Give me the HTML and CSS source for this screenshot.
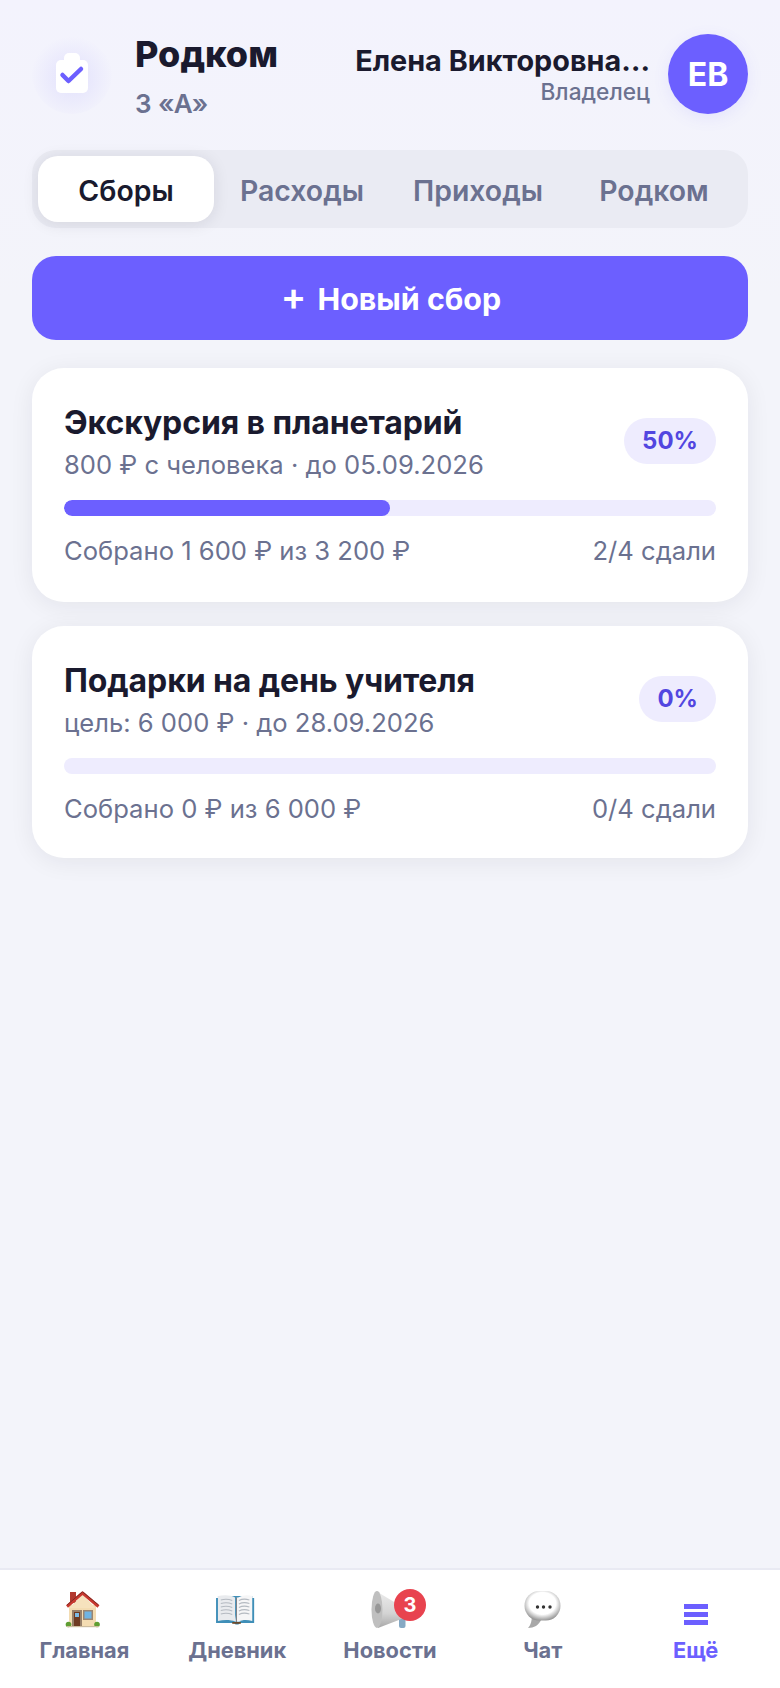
FILE: index.html
```html
<!DOCTYPE html>
<html lang="ru">
<head>
    <meta charset="UTF-8">
    <meta name="viewport" content="width=device-width, initial-scale=1.0">
    <title>Родком</title>
    <link rel="stylesheet" href="styles.css">
</head>
<body>
    <div class="page">
        <header class="header">
            <div class="logo">
                <svg width="48" height="56" viewBox="0 0 48 56">
                    <rect x="16" y="7" width="16" height="14" rx="5" fill="#fff"/>
                    <rect x="8" y="14" width="32" height="33" rx="5" fill="#fff"/>
                    <path d="M14.500 29l6 6 12.500-12" fill="none" stroke="#6c5fff" stroke-width="4.500" stroke-linecap="round" stroke-linejoin="round"/>
                </svg>
            </div>
            <div class="brand">
                <div class="brand-title">Родком</div>
                <div class="brand-class">3 «А»</div>
            </div>
            <div class="user">
                <div class="user-name">Елена Викторовна…</div>
                <div class="user-role">Владелец</div>
            </div>
            <div class="avatar">ЕВ</div>
        </header>

        <nav class="tabs">
            <div class="tab active">Сборы</div>
            <div class="tab">Расходы</div>
            <div class="tab">Приходы</div>
            <div class="tab">Родком</div>
        </nav>

        <button class="add-btn"><span class="plus">+</span> Новый сбор</button>

        <div class="card">
            <div class="card-top">
                <div>
                    <div class="card-title">Экскурсия в планетарий</div>
                    <div class="card-sub">800 ₽ с человека · до 05.09.2026</div>
                </div>
                <div class="pill">50%</div>
            </div>
            <div class="bar"><div class="bar-fill" style="width: 50%;"></div></div>
            <div class="card-bottom">
                <span>Собрано 1 600 ₽ из 3 200 ₽</span>
                <span>2/4 сдали</span>
            </div>
        </div>

        <div class="card">
            <div class="card-top">
                <div>
                    <div class="card-title">Подарки на день учителя</div>
                    <div class="card-sub">цель: 6 000 ₽ · до 28.09.2026</div>
                </div>
                <div class="pill">0%</div>
            </div>
            <div class="bar"><div class="bar-fill" style="width: 0%;"></div></div>
            <div class="card-bottom">
                <span>Собрано 0 ₽ из 6 000 ₽</span>
                <span>0/4 сдали</span>
            </div>
        </div>

        <footer class="bottom-nav">
            <div class="nav-item">
                <div class="nav-icon">
                    <svg width="40" height="40" viewBox="-1 0 40 40">
                        <rect x="5" y="2" width="6" height="11" fill="#b23a30"/>
                        <rect x="4" y="15" width="27" height="21" fill="#f3dcb2"/>
                        <path d="M17.500 5L31 18H4z" fill="#f6e2bd"/>
                        <path d="M2 16.500L17.500 3 33.500 16.500" fill="none" stroke="#c8382e" stroke-width="3" stroke-linejoin="round"/>
                        <path d="M2 15L17.500 1.800 33.500 15" fill="none" stroke="#5c2420" stroke-width="0.700"/>
                        <rect x="7" y="20" width="10" height="16" fill="#97806a"/>
                        <rect x="9" y="22" width="6" height="14" fill="#6e3a22"/>
                        <rect x="10" y="23" width="4" height="4" fill="#7dbbe6"/>
                        <rect x="18" y="20" width="10" height="10" fill="#9b8570"/>
                        <rect x="19.500" y="21.500" width="7" height="7" fill="#6fb4e4"/>
                        <circle cx="3.500" cy="34.500" r="2.800" fill="#5f9e32"/>
                        <circle cx="32" cy="34.500" r="2.800" fill="#5f9e32"/>
                        <rect x="2" y="36" width="32" height="1.200" fill="#cdbd9f"/>
                    </svg>
                </div>
                <div class="nav-label">Главная</div>
            </div>
            <div class="nav-item">
                <div class="nav-icon">
                    <svg width="40" height="40" viewBox="-1 0 42 40" preserveAspectRatio="none">
                        <path d="M-2 8h2V6h36v2h2v25H23l-1.500 1.500h-3L17 33H-2z" fill="#3f8fb8"/>
                        <path d="M0 6c7-1.500 14-1 18 1.500v24C14 30 7 29.500 0 31z" fill="#e9ebee"/>
                        <path d="M36 6c-5-1.500-10-1-14.500 1.500L18 31.500h3.500C26 29.500 31 29.500 36 31z" fill="#f6f6f7"/>
                        <path d="M21.500 7.500v24" stroke="#f6f6f7" stroke-width="4"/>
                        <path d="M3 10c4-1 8-1 12 .5M3 13.500c4-1 8-1 12 .5M3 17c4-1 8-1 12 .5M3 20.500c4-1 8-1 12 .5M3 24c4-1 8-1 12 .5M33 10c-3-1-8-1-11 .5M33 13.500c-3-1-8-1-11 .5M33 17c-3-1-8-1-11 .5M33 20.500c-3-1-8-1-11 .5M33 24c-3-1-8-1-11 .5" fill="none" stroke="#b4bac1" stroke-width="1.100"/>
                        <path d="M19.500 7.500v25" stroke="#7a7d83" stroke-width="1"/>
                        <rect x="15" y="32" width="9" height="1.800" fill="#6b4a2c"/>
                    </svg>
                </div>
                <div class="nav-label">Дневник</div>
            </div>
            <div class="nav-item">
                <div class="nav-icon">
                    <svg width="40" height="40" viewBox="0 0 40 40">
                        <defs>
                            <linearGradient id="horn" x1="0" y1="0" x2="0" y2="1">
                                <stop offset="0" stop-color="#ececec"/>
                                <stop offset="0.600" stop-color="#d4d4d4"/>
                                <stop offset="1" stop-color="#a8a8a8"/>
                            </linearGradient>
                        </defs>
                        <rect x="29" y="26" width="6.500" height="12" rx="2" fill="#86a9c4"/>
                        <path d="M6 1L34 18v10L8 38z" fill="url(#horn)"/>
                        <ellipse cx="7" cy="19.500" rx="5.500" ry="18.500" fill="#bfbfbf"/>
                        <ellipse cx="8" cy="18.500" rx="3" ry="5" fill="#979797"/>
                    </svg>
                    <span class="badge">3</span>
                </div>
                <div class="nav-label">Новости</div>
            </div>
            <div class="nav-item">
                <div class="nav-icon">
                    <svg width="40" height="40" viewBox="0 0 40 40">
                        <defs>
                            <radialGradient id="bubble" cx="0.500" cy="0.420" r="0.600">
                                <stop offset="0.620" stop-color="#ffffff"/>
                                <stop offset="1" stop-color="#8f8f8f"/>
                            </radialGradient>
                        </defs>
                        <path d="M9 24C9 30 8 35 5 38c6 0 11-3 13-8z" fill="#a8a8a8"/>
                        <rect x="1.500" y="1" width="36" height="29.500" rx="14.700" fill="url(#bubble)"/>
                        <circle cx="14.500" cy="17" r="1.700" fill="#333"/>
                        <circle cx="20.500" cy="17" r="1.700" fill="#333"/>
                        <circle cx="27" cy="17" r="1.700" fill="#333"/>
                    </svg>
                </div>
                <div class="nav-label">Чат</div>
            </div>
            <div class="nav-item current">
                <div class="nav-icon">
                    <div class="burger"><i></i><i></i><i></i></div>
                </div>
                <div class="nav-label">Ещё</div>
            </div>
        </footer>
    </div>
</body>
</html>
```

FILE: styles.css
```css
* { box-sizing: border-box; }
html, body { margin: 0; padding: 0; }
body { font-family: Inter, "Noto Sans", Arial, sans-serif; background-color: #f3f4fa; color: #1a1a2e; }
.page { height: 1688px; display: flex; flex-direction: column; padding: 0 32px; background: linear-gradient(#f3f3fd, #f3f4fa 300px); overflow: hidden; }

.header { display: flex; align-items: center; height: 148px; margin-bottom: 2px; }
.logo { width: 80px; height: 80px; margin-right: 23px; display: flex; align-items: center; justify-content: center; border-radius: 50%; background: radial-gradient(circle at 50% 55%, rgba(108,95,255,0.13), rgba(108,95,255,0) 70%); flex-shrink: 0; }
.logo svg { display: block; }
.brand { flex: 1; min-width: 0; margin-top: 4px; }
.brand-title { font-size: 36px; font-weight: 800; line-height: 44px; }
.brand-class { font-size: 26px; font-weight: 600; color: #6b7190; line-height: 32px; margin-top: 12px; }
.user { width: 320px; text-align: right; margin-right: 18px; margin-top: 2px; }
.user-name { font-size: 28.800px; font-weight: 700; line-height: 34px; white-space: nowrap; }
.user-role { font-size: 22.700px; font-weight: 500; color: #6b7190; line-height: 28px; }
.avatar { width: 80px; height: 80px; border-radius: 50%; background: #6c5fff; color: #fff; font-size: 32px; font-weight: 700; display: flex; align-items: center; justify-content: center; box-shadow: 0 4px 16px rgba(108,95,255,0.1); flex-shrink: 0; }

.tabs { display: flex; height: 78px; padding: 6px; background: #eaebf3; border-radius: 24px; }
.tab { flex: 1; display: flex; align-items: center; justify-content: center; padding-top: 2px; font-size: 28.400px; font-weight: 600; color: #6b7190; border-radius: 20px; }
.tab.active { background: #fff; color: #1a1a2e; box-shadow: 0 2px 16px rgba(26,26,46,0.1); }

.add-btn { height: 84px; margin-top: 28px; padding: 2px 0 0 2px; border: none; border-radius: 24px; background: #6c5fff; color: #fff; font-family: inherit; font-size: 30.400px; font-weight: 700; display: flex; align-items: center; justify-content: center; gap: 11px; }
.plus { font-size: 38px; font-weight: 600; line-height: 1; margin-bottom: 7px; }

.card { margin-top: 28px; height: 234px; padding: 35px 32px 0; background: #fff; border-radius: 32px; box-shadow: 0 4px 24px rgba(26,26,46,0.07); }
.card + .card { margin-top: 24px; height: 232px; }
.card-top { display: flex; align-items: center; justify-content: space-between; }
.card-title { font-size: 32px; font-weight: 700; line-height: 40px; letter-spacing: -0.1px; }
.card-sub { font-size: 25.600px; color: #6b7190; line-height: 34px; margin-top: 5px; }
.pill { padding: 0 18px; height: 46px; line-height: 46px; margin-bottom: 4px; border-radius: 23px; background: #eeecfe; color: #5246e0; font-size: 24px; font-weight: 700; }
.bar { height: 16px; margin-top: 18px; background: #eeecfe; border-radius: 8px; overflow: hidden; }
.bar-fill { height: 100%; background: #6c5fff; border-radius: 8px; }
.card-bottom { display: flex; justify-content: space-between; margin-top: 18px; font-size: 25.600px; color: #6b7190; line-height: 34px; }

.bottom-nav { margin: auto -32px 0; height: 120px; padding: 20px 8px 0; display: flex; background: #fff; border-top: 2px solid #e9eaf3; }
.nav-item { flex: 1; display: flex; flex-direction: column; align-items: center; }
.nav-icon { position: relative; width: 40px; height: 40px; display: flex; align-items: center; justify-content: center; }
.nav-icon svg { display: block; overflow: visible; }
.nav-label { margin-top: 5px; font-size: 21.800px; font-weight: 700; color: #6b7190; line-height: 30px; }
.current .nav-label { color: #6c5fff; }
.badge { position: absolute; top: -1px; right: -16px; width: 32px; height: 32px; border-radius: 50%; background: #e8434f; color: #fff; font-size: 20px; font-weight: 700; display: flex; align-items: center; justify-content: center; }
.burger { display: flex; flex-direction: column; gap: 3px; width: 24px; margin-top: 9px; }
.burger i { display: block; height: 5px; background: #6c5fff; }
```
